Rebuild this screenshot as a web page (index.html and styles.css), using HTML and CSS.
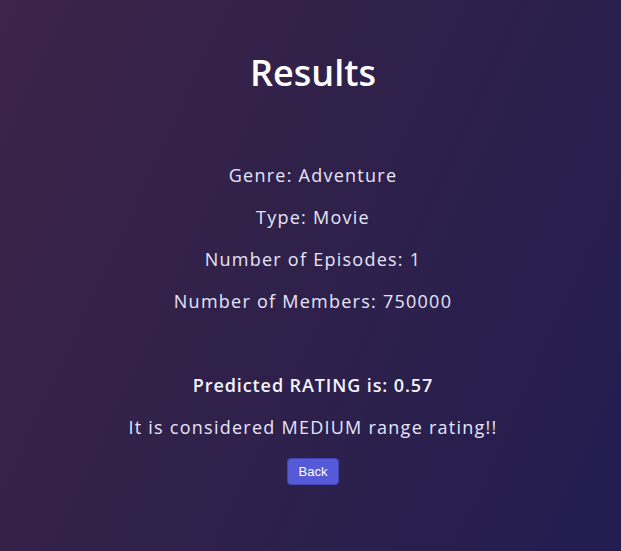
FILE: index.html
```html
<!DOCTYPE html>
<html lang="en">
<head>
<meta charset="utf-8">
<title>Results</title>
<link rel="stylesheet" href="styles.css">
</head>
<body>
<main class="page">
  <h1 class="title">Results</h1>
  <section class="details">
    <p class="line">Genre: Adventure</p>
    <p class="line">Type: Movie</p>
    <p class="line">Number of Episodes: 1</p>
    <p class="line">Number of Members: 750000</p>
  </section>
  <section class="result">
    <p class="line strong">Predicted RATING is: 0.57</p>
    <p class="line">It is considered MEDIUM range rating!!</p>
    <button class="back" type="button">Back</button>
  </section>
</main>
</body>
</html>
```
FILE: styles.css
```css
html, body {
  margin: 0;
  height: 100%;
}
body {
  background: linear-gradient(115deg, #3d2449 0%, #30214a 45%, #231d50 100%);
  color: #e6e6fa;
  font-family: "Open Sans", "Liberation Sans", sans-serif;
}
.page {
  display: flex;
  flex-direction: column;
  align-items: center;
  text-align: center;
  padding-top: 24px;
  padding-left: 5px;
}
.title {
  font-size: 36px;
  font-weight: 600;
  color: #ffffff;
  margin: 24px 0 66px;
  line-height: 49px;
}
.details, .result {
  display: flex;
  flex-direction: column;
  align-items: center;
}
.details {
  gap: 18px;
  margin-bottom: 60px;
}
.result {
  gap: 18px;
}
.line {
  margin: 0;
  font-size: 18px;
  line-height: 24px;
  letter-spacing: 1.25px;
}
.strong {
  font-weight: 600;
  letter-spacing: 0.9px;
  color: #f4f4fc;
}
.back {
  font-family: "Liberation Sans", Arial, sans-serif;
  font-size: 13px;
  color: #ffffff;
  background: #5659d8;
  border: 1px solid #4446b8;
  border-radius: 4px;
  padding: 5px 11px;
  height: 27px;
  margin-top: 1px;
}
```
